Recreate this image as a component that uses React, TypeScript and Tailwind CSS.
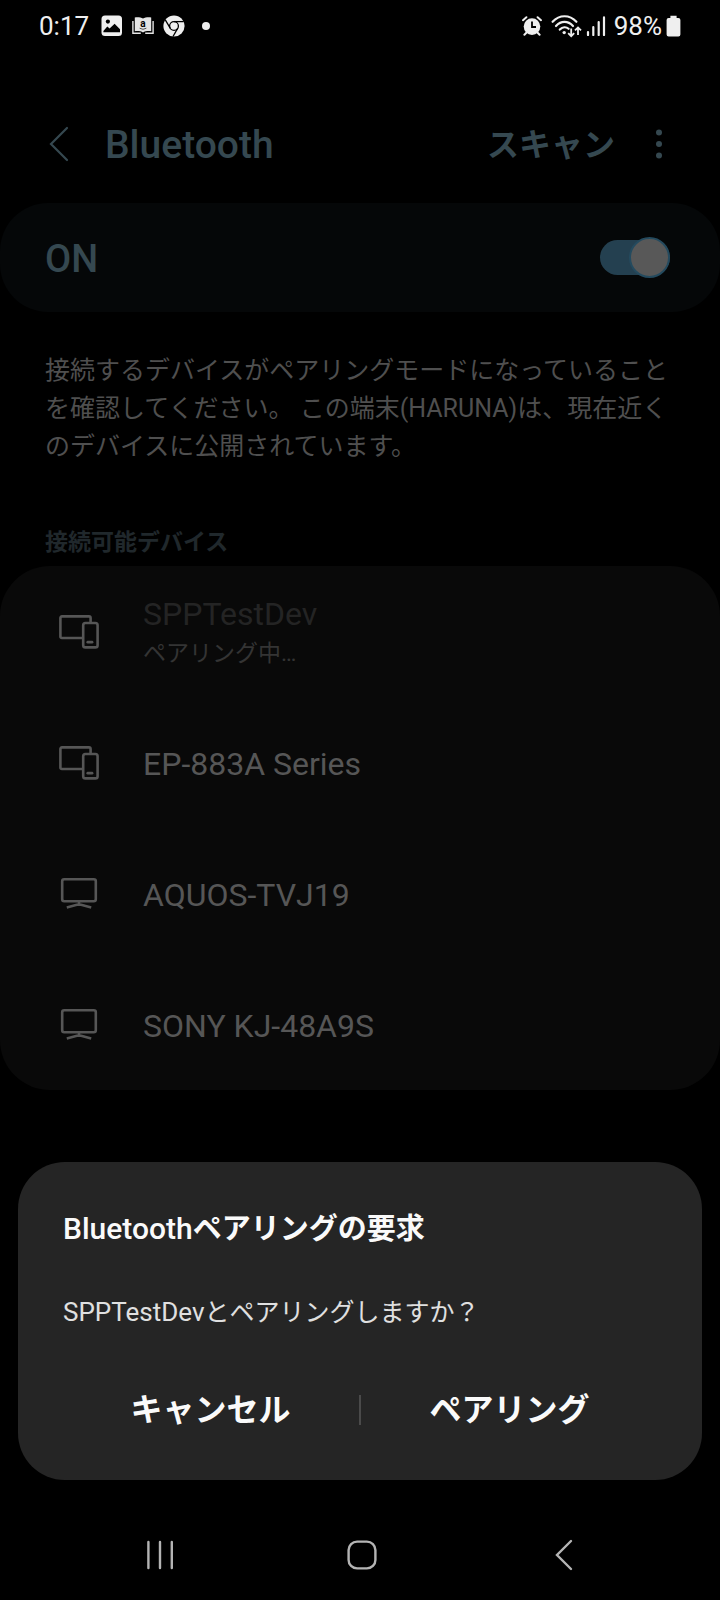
import { useState, type ReactNode } from "react";

function PictureIcon() {
  return (
    <svg width="22" height="22" viewBox="0 0 22 22" aria-hidden="true">
      <rect x="0.5" y="0.5" width="20.5" height="20.5" rx="3.5" fill="#efefef" />
      <circle cx="6.9" cy="6.6" r="2.1" fill="#000" />
      <path d="M2.4 17.2V16L6.3 11.4L8.6 13.4L13.6 8.8L19 14.2V17.2Z" fill="#000" />
    </svg>
  );
}

function BookIcon() {
  return (
    <svg width="22" height="18" viewBox="0 0 22 18" aria-hidden="true">
      <path d="M2.8 0.4C6 0 9 0.4 11 1.4C13 0.4 16 0 19.2 0.4V14.2C16 13.8 13 14.2 11 15.4C9 14.2 6 13.8 2.8 14.2Z" fill="#e4e4e4" />
      <path d="M0.9 4V16.2H8.8M13.2 16.2H21.1V4" fill="none" stroke="#e4e4e4" strokeWidth="1.4" />
      <text x="11" y="10.2" textAnchor="middle" fontSize="10" fontWeight="bold" fontFamily="Roboto, sans-serif" fill="#000">a</text>
      <path d="M7.6 11.2Q11 13.4 14.4 11.2" fill="none" stroke="#555" strokeWidth="1" />
    </svg>
  );
}

function ChromeIcon() {
  return (
    <svg width="22" height="22" viewBox="0 0 22 22" aria-hidden="true">
      <circle cx="11" cy="11" r="10.6" fill="#efefef" />
      <g fill="none" stroke="#000" strokeWidth="1.3">
        <circle cx="11" cy="11" r="4.4" />
        <path d="M11 6.6H20.8" />
        <path d="M7.2 13.2L2.3 4.8" />
        <path d="M14.8 13.2L10 21.5" />
      </g>
    </svg>
  );
}

function AlarmIcon() {
  return (
    <svg width="20" height="20" viewBox="0 0 20 20" aria-hidden="true">
      <circle cx="10" cy="10.6" r="8.3" fill="#efefef" />
      <path d="M1 4.2L4.4 1.2M19 4.2L15.6 1.2M4.6 16.5L2.4 18.8M15.4 16.5L17.6 18.8" stroke="#efefef" strokeWidth="2" strokeLinecap="round" />
      <path d="M10 5.6V11H14" fill="none" stroke="#000" strokeWidth="1.8" />
    </svg>
  );
}

function WifiIcon() {
  return (
    <svg width="31" height="24" viewBox="0 0 31 24" aria-hidden="true">
      <g fill="none" stroke="#efefef" strokeWidth="2.2" strokeLinecap="round">
        <path d="M1.6 7.8C8.5 0.4 18.5 0.4 25.4 7.8" />
        <path d="M5 12C10 6.6 17 6.6 22 12" />
        <path d="M8.8 15.6C11.6 12.6 15.2 12.6 17.6 14.8" />
      </g>
      <circle cx="13.2" cy="18.6" r="1.7" fill="#efefef" />
      <path d="M20.2 14.4V22M17.2 19.2L20.2 22.2L23.2 19.2M27 21V13.6M24 16.4L27 13.4L30 16.4" fill="none" stroke="#efefef" strokeWidth="1.8" />
    </svg>
  );
}

function SignalIcon() {
  return (
    <svg width="20" height="20" viewBox="0 0 20 20" aria-hidden="true">
      <path d="M2 16V19M7.3 11.2V19M12.7 6V19M18 1.4V19" stroke="#efefef" strokeWidth="2.2" strokeLinecap="round" />
    </svg>
  );
}

function BatteryIcon() {
  return (
    <svg width="15" height="22" viewBox="0 0 15 22" aria-hidden="true">
      <path d="M4.4 0.8H10.6V3H12.4Q14.4 3 14.4 5V19.4Q14.4 21.4 12.4 21.4H2.6Q0.6 21.4 0.6 19.4V5Q0.6 3 2.6 3H4.4Z" fill="#efefef" />
    </svg>
  );
}

function DevicesIcon() {
  return (
    <svg width="40" height="34" viewBox="0 0 40 34" fill="none" stroke="#565656" strokeWidth="2.6" aria-hidden="true">
      <path d="M23.5 23H3Q1.4 23 1.4 21.4V3Q1.4 1.4 3 1.4H30Q31.6 1.4 31.6 3V7.5" />
      <rect x="24.2" y="8" width="14.4" height="24.4" rx="2.2" />
      <path d="M28.8 27.2H33" strokeWidth="2.8" strokeLinecap="round" />
    </svg>
  );
}

function TvIcon() {
  return (
    <svg width="40" height="34" viewBox="0 0 40 34" fill="none" stroke="#565656" strokeWidth="2.6" aria-hidden="true">
      <rect x="3.2" y="2.2" width="33.6" height="22" rx="2" />
      <path d="M20 24.6V28M7.8 30.6L17.8 27.8H22.2L32.2 30.6" />
    </svg>
  );
}

type Device = { name: string; status?: string; icon: ReactNode };

const devices: Device[] = [
  { name: "SPPTestDev", status: "ペアリング中…", icon: <DevicesIcon /> },
  { name: "EP-883A Series", icon: <DevicesIcon /> },
  { name: "AQUOS-TVJ19", icon: <TvIcon /> },
  { name: "SONY KJ-48A9S", icon: <TvIcon /> },
];

function StatusBar() {
  return (
    <div className="flex h-13 items-center justify-between px-[39px] text-[26px] leading-8 text-[#efefef]">
      <div className="flex items-center">
        <span>0:17</span>
        <span className="ml-3 flex items-center gap-[9px]">
          <PictureIcon />
          <BookIcon />
          <ChromeIcon />
        </span>
        <span className="ml-[17px] size-2 rounded-full bg-[#efefef]" />
      </div>
      <div className="flex items-center">
        <AlarmIcon />
        <span className="ml-[9px]"><WifiIcon /></span>
        <span className="ml-1"><SignalIcon /></span>
        <span className="ml-2">98%</span>
        <span className="ml-1"><BatteryIcon /></span>
      </div>
    </div>
  );
}

function PowerSwitch() {
  const [on, setOn] = useState(true);
  return (
    <label htmlFor="bluetooth-power" className="flex items-center justify-between rounded-[48px] bg-[#050708] py-8 pr-[50px] pl-[45px]">
      <span className="pt-1 text-[38px] leading-[41px] font-medium text-[#354850]">ON</span>
      <span className="relative flex h-[41px] w-[70px] items-center">
        <input
          id="bluetooth-power"
          type="checkbox"
          role="switch"
          checked={on}
          onChange={(e) => setOn(e.target.checked)}
          className="peer h-[35px] w-full appearance-none rounded-full bg-[#303030] checked:bg-[#244050]"
        />
        <span className="pointer-events-none absolute left-0 size-[41px] rounded-full border-2 border-[#244a5e] bg-[#585858] peer-checked:right-0 peer-checked:left-auto" />
      </span>
    </label>
  );
}

export default function App() {
  return (
    <div className="flex min-h-screen flex-col bg-black font-['Roboto','Noto_Sans_CJK_JP',sans-serif]" lang="ja">
      <StatusBar />
      <header className="flex h-[151px] items-center px-[45px] pt-8 text-[#354850]">
        <button type="button" aria-label="戻る" className="flex w-[60px] pl-1">
          <svg width="20" height="36" viewBox="0 0 20 36" fill="none" stroke="currentColor" strokeWidth="2.2" strokeLinecap="round" aria-hidden="true">
            <path d="M18 2L2 18L18 34" />
          </svg>
        </button>
        <h1 className="flex-1 pt-1 text-[39px] leading-[45px] font-medium">Bluetooth</h1>
        <button type="button" className="pt-1 text-[32px] leading-[45px] font-bold">スキャン</button>
        <button type="button" aria-label="その他のオプション" className="ml-7 flex w-8 justify-center">
          <svg width="8" height="30" viewBox="0 0 8 30" fill="currentColor" aria-hidden="true">
            <circle cx="4" cy="3.5" r="3" />
            <circle cx="4" cy="15" r="3" />
            <circle cx="4" cy="26.5" r="3" />
          </svg>
        </button>
      </header>
      <main>
        <PowerSwitch />
        <p className="px-[45px] pt-10 text-[25px] leading-[38px] text-[#4f4f4f]">
          接続するデバイスがペアリングモードになっていることを確認してください。 この端末(HARUNA)は、現在近くのデバイスに公開されています。
        </p>
        <h2 className="mt-[60px] px-[45px] pb-[6px] text-[23px] leading-[34px] font-bold text-[#20282c]">接続可能デバイス</h2>
        <ul className="rounded-[50px] bg-[#090909]">
          {devices.map((d) => (
            <li key={d.name}>
              <button type="button" className="flex h-[131px] w-full items-center pl-[59px] text-left">
                {d.icon}
                <span className="ml-11 flex flex-col pt-[2px]">
                  <span className={d.status ? "pt-[2px] text-[32px] leading-[38px] text-[#242424]" : "text-[32px] leading-[38px] text-[#565656]"}>
                    {d.name}
                  </span>
                  {d.status && <span className="pt-[2px] text-[23px] leading-[38px] text-[#343434]">{d.status}</span>}
                </span>
              </button>
            </li>
          ))}
        </ul>
      </main>
      <section role="dialog" aria-labelledby="pair-title" aria-describedby="pair-text" className="mx-[18px] mt-[72px] rounded-[47px] bg-[#252525] pt-[45px] pb-10">
        <h2 id="pair-title" className="px-[45px] text-[29px] leading-[45px] font-bold text-[#fafafa]">
          <span className="text-[30px] leading-none font-medium">Bluetooth</span>ペアリングの要求
        </h2>
        <p id="pair-text" className="mt-[42px] px-[45px] text-[25px] leading-[38px] text-[#e0e0e0]">
          <span className="text-[26px] leading-none">SPPTestDev</span>とペアリングしますか？
        </p>
        <div className="mt-12 flex items-center px-11 text-[32px] leading-[60px] font-bold text-[#fafafa]">
          <button type="button" className="h-[60px] flex-1">キャンセル</button>
          <span className="h-[30px] w-0.5 bg-[#4a4a4a]" />
          <button type="button" className="h-[60px] flex-1">ペアリング</button>
        </div>
      </section>
      <nav aria-label="ナビゲーション" className="mt-auto flex h-[91px] items-center justify-between pr-[136px] pl-[140px] text-[#b4b4b4]">
        <button type="button" aria-label="最近使ったアプリ" className="flex w-10 justify-center">
          <svg width="28" height="30" viewBox="0 0 28 30" stroke="currentColor" strokeWidth="2.4" strokeLinecap="round" aria-hidden="true">
            <path d="M2.4 2V28M14 2V28M25.8 2V28" />
          </svg>
        </button>
        <button type="button" aria-label="ホーム" className="flex w-10 justify-center">
          <svg width="30" height="30" viewBox="0 0 30 30" fill="none" stroke="currentColor" strokeWidth="2.4" aria-hidden="true">
            <rect x="1.6" y="1.6" width="26.8" height="26.8" rx="8.5" />
          </svg>
        </button>
        <button type="button" aria-label="前の画面" className="flex w-10 justify-center">
          <svg width="20" height="32" viewBox="0 0 20 32" fill="none" stroke="currentColor" strokeWidth="2.4" strokeLinecap="round" aria-hidden="true">
            <path d="M17 2L3 16L17 30" />
          </svg>
        </button>
      </nav>
    </div>
  );
}
